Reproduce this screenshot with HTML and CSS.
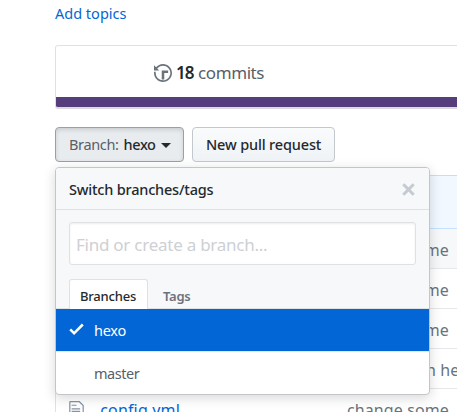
FILE: index.html
```html
<!DOCTYPE html>
<html lang="en">
<head>
<meta charset="utf-8">
<title>Repository branches</title>
<link rel="stylesheet" href="styles.css">
</head>
<body>
<main class="page">
  <a class="topics"><span>Add topics</span></a>
  <section class="summary">
    <div class="commits">
      <svg class="history" viewBox="0 1 14 14"><path d="M8 13H6V6h5v2H8v5zM7 1C4.81 1 2.87 2.02 1.59 3.59L0 2v4h4L2.5 4.5C3.55 3.17 5.17 2.3 7 2.3c3.14 0 5.7 2.56 5.7 5.7s-2.56 5.7-5.7 5.7A5.71 5.71 0 0 1 1.3 8c0-.34.03-.67.09-1H.08C.03 7.33 0 7.66 0 8c0 3.86 3.14 7 7 7s7-3.14 7-7-3.14-7-7-7z"/></svg>
      <b>18</b><span class="commits-label">commits</span>
    </div>
    <div class="language"></div>
  </section>
  <nav class="actions">
    <button class="btn selected"><span class="branch-label">Branch:</span><span class="branch-name">hexo</span><i class="caret"></i></button>
    <button class="btn pull"><span>New pull request</span></button>
  </nav>
  <section class="files">
    <div class="latest"></div>
    <div class="row shaded"><span class="message">change some</span></div>
    <div class="row"><span class="message">change some</span></div>
    <div class="row"><span class="message">change some</span></div>
    <div class="row"><span class="message push">h hexo</span></div>
    <div class="row last">
      <svg class="file" viewBox="0 1 12 14"><path d="M6 5H2V4h4v1zM2 8h7V7H2v1zm0 2h7V9H2v1zm0 2h7v-1H2v1zm10-7.5V14c0 .55-.45 1-1 1H1c-.55 0-1-.45-1-1V2c0-.55.45-1 1-1h7.500L12 4.500zM11 5L8 2H1v12h10V5z"/></svg>
      <a class="filename">_config.yml</a><span class="message">change some</span>
    </div>
  </section>
  <div class="menu">
    <header class="menu-header"><span class="menu-title">Switch branches/tags</span>
      <svg class="close" viewBox="0 0 13 13"><path d="M1.300 1.300l10.400 10.400M11.700 1.300L1.300 11.700"/></svg>
    </header>
    <div class="filters">
      <input class="search" placeholder="Find or create a branch...">
      <div class="tabs"><span class="tab active"><span>Branches</span></span><span class="tab tags">Tags</span></div>
    </div>
    <div class="item current"><svg class="check" viewBox="0 3 12 10"><path d="M12 5l-8 8-4-4 1.500-1.500L4 10l6.500-6.500L12 5z"/></svg><span class="hexo">hexo</span></div>
    <div class="item"><span class="master">master</span></div>
  </div>
</main>
</body>
</html>
```
FILE: styles.css
```css
* { box-sizing: border-box; }
body { margin: 0; background: #fff; color: #24292e; font-family: "Noto Sans", sans-serif; }
.page { position: relative; width: 457px; height: 412px; overflow: hidden; padding-left: 55px; white-space: nowrap; }
.topics { display: block; height: 45px; padding-top: 2px; color: #0366d6; font-size: 14.500px; line-height: 22px; letter-spacing: 0; }
.summary { width: 500px; height: 64px; border: 1px solid #dfe2e5; border-bottom: 2px solid #dcdcdf; border-radius: 3px; overflow: hidden; }
.commits { display: flex; align-items: center; height: 51px; padding: 2px 0 0 98px; color: #586069; font-size: 17px; }
.commits b { width: 18px; margin-left: 4px; color: #24292e; font-weight: 600; letter-spacing: -1px; }
.commits-label { margin-left: 4px; letter-spacing: -.4px; }
.history { width: 18px; height: 18px; fill: #6a737d; }
.language { height: 10px; background: #563d7c; }
.actions { display: flex; gap: 8px; margin-top: 18px; }
.btn { display: flex; align-items: center; height: 35px; padding: 0 13px 2px; border: 1px solid #c3c8cd; border-radius: 4px; background: linear-gradient(#fafbfc, #eff3f6); color: #24292e; font: 500 14.500px "Noto Sans", sans-serif; white-space: nowrap; }
.btn.selected { width: 129px; border-color: #9ca0a4; background: #e9ecef; box-shadow: inset 0 2px 4px rgba(27,31,35,.15); }
.btn.pull { width: 143px; letter-spacing: -.15px; }
.branch-label { color: #586069; font-weight: 400; letter-spacing: -.35px; }
.branch-name { margin-left: 5px; letter-spacing: -.4px; }
.caret { margin: 3px 0 0 5px; border: 5px solid transparent; border-top-color: #24292e; border-bottom: 0; }
.files { width: 500px; height: 260px; margin-top: 13px; border: 1px solid #dfe2e5; border-top-color: #c8ddef; border-radius: 3px; }
.latest { height: 53px; background: #f1f8ff; border-bottom: 1px solid #c8e1ff; }
.row { display: flex; align-items: center; height: 40px; padding: 2px 0 0 291px; border-bottom: 1px solid #e5e7ea; color: #6a737d; font-size: 16px; }
.shaded { background: #f6f8fa; }
.message { width: 103px; letter-spacing: .1px; flex: none; }
.push { margin-left: 79px; }
.last { padding-left: 13px; border: 0; }
.file { width: 15px; height: 17px; margin-top: -2px; fill: #8292a8; }
.filename { width: 254px; margin-left: 9px; color: #0366d6; letter-spacing: .15px; }
.menu { position: absolute; left: 55px; top: 167px; width: 375px; height: 228px; border: 1px solid #c2c6ca; border-radius: 4px; background: #fff; box-shadow: 0 3px 12px rgba(27,31,35,.18); overflow: hidden; }
.menu-header { display: flex; align-items: center; justify-content: space-between; height: 42px; padding: 1px 14px 0 13px; border-bottom: 1px solid #dfe2e5; background: #f6f8fa; }
.menu-title { font-size: 14.500px; font-weight: 500; letter-spacing: -.2px; }
.close { width: 13px; height: 13px; fill: none; stroke: #c6cbd1; stroke-width: 3px; }
.filters { height: 99px; padding: 12px 13px 0; border-bottom: 1px solid #dfe2e5; background: #f6f8fa; }
.search { display: block; width: 347px; height: 43px; padding: 2px 6px 0; border: 1px solid #dfe2e5; border-radius: 3px; background: #fff; box-shadow: inset 0 1px 2px rgba(27,31,35,.075); font: 17px "Noto Sans", sans-serif; letter-spacing: -.25px; }
.search::placeholder { color: #cdd0d4; opacity: 1; }
.tabs { display: flex; margin-top: 14px; }
.tab { display: flex; align-items: center; height: 30px; padding: 2px 0 0 10px; border: 1px solid transparent; border-bottom: 0; color: #6a737d; font-size: 13px; font-weight: 600; letter-spacing: -.25px; }
.tab.active { width: 79px; border-color: #dfe2e5; border-radius: 3px 3px 0 0; background: #fff; color: #24292e; font-weight: 500; letter-spacing: -.2px; }
.tab.tags { padding-left: 14px; }
.item { display: flex; align-items: center; height: 43px; padding: 0 0 2px 38px; color: #586069; font-size: 14.500px; }
.current { padding: 0 0 0 13px; border-bottom: 1px solid #e5e7ea; background: #0366d6; background-clip: padding-box; color: #fff; }
.check { width: 15px; height: 12px; margin: -3px 10px 0 0; fill: #fff; }
.hexo { letter-spacing: -.25px; }
.master { letter-spacing: -.45px; }
```
